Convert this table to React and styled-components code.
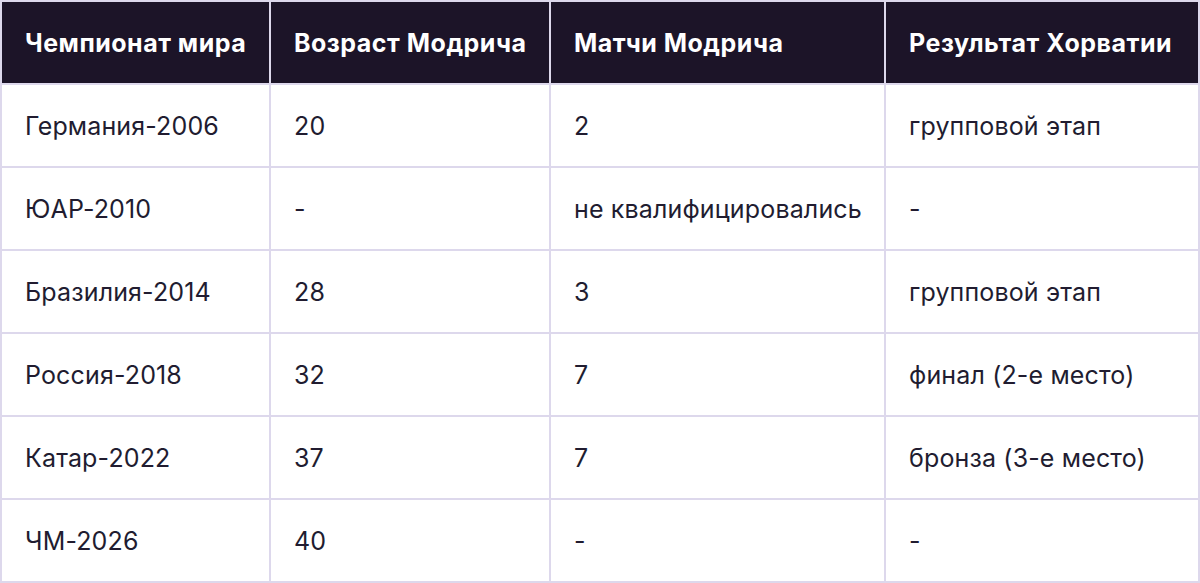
import styled, { createGlobalStyle } from 'styled-components';

const GlobalStyle = createGlobalStyle`
  html, body {
    margin: 0;
    padding: 0;
    background: #ffffff;
  }
  body {
    font-family: Inter, "Noto Sans", sans-serif;
  }
`;

const Table = styled.table`
  width: 1198px;
  border-collapse: collapse;
  table-layout: fixed;
  font-family: Inter, "Noto Sans", sans-serif;
  font-size: 25px;
  color: #211c30;
`;

const HeadCell = styled.th`
  width: ${props => props.width}px;
  height: 83px;
  padding: 0 0 0 23px;
  box-sizing: border-box;
  background: #1c1428;
  color: #ffffff;
  font-weight: 700;
  letter-spacing: 0.5px;
  text-align: left;
  border: 2px solid #ddd8ec;
  white-space: nowrap;
`;

const Cell = styled.td`
  height: 83px;
  padding: 0 0 0 23px;
  box-sizing: border-box;
  border: 2px solid #ddd8ec;
  font-weight: 400;
  letter-spacing: 0.15px;
  white-space: nowrap;
`;

const columns = [
  { title: 'Чемпионат мира', width: 269 },
  { title: 'Возраст Модрича', width: 280 },
  { title: 'Матчи Модрича', width: 335 },
  { title: 'Результат Хорватии', width: 314 },
];

const rows = [
  ['Германия-2006', '20', '2', 'групповой этап'],
  ['ЮАР-2010', '-', 'не квалифицировались', '-'],
  ['Бразилия-2014', '28', '3', 'групповой этап'],
  ['Россия-2018', '32', '7', 'финал (2-е место)'],
  ['Катар-2022', '37', '7', 'бронза (3-е место)'],
  ['ЧМ-2026', '40', '-', '-'],
];

export default function App() {
  return (
    <>
      <GlobalStyle />
      <Table>
        <thead>
          <tr>
            {columns.map(col => (
              <HeadCell key={col.title} width={col.width}>{col.title}</HeadCell>
            ))}
          </tr>
        </thead>
        <tbody>
          {rows.map(row => (
            <tr key={row[0]}>
              {row.map((value, i) => (
                <Cell key={i}>{value}</Cell>
              ))}
            </tr>
          ))}
        </tbody>
      </Table>
    </>
  );
}
